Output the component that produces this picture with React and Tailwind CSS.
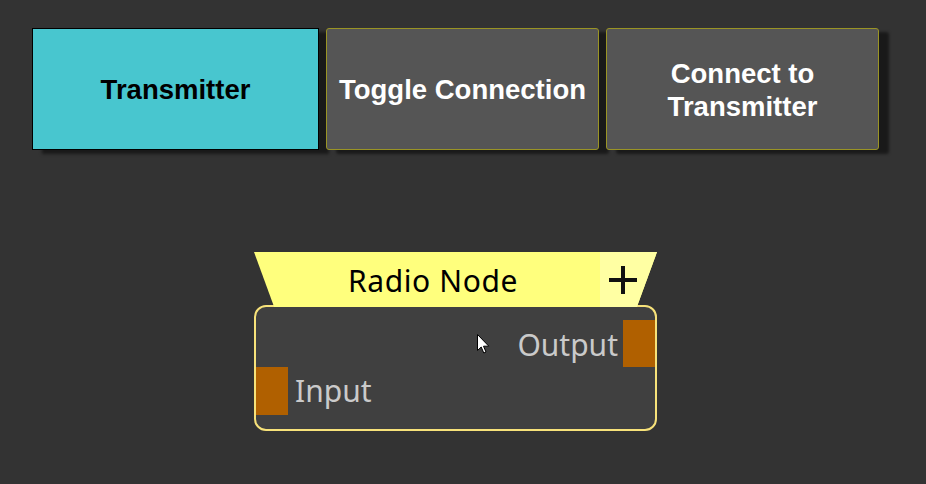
import React from "react";

const btnText = "font-['Liberation_Sans',Arial,sans-serif] font-bold text-[27.5px] leading-[1.2]";

function ToolButton({ label, active }) {
    return (
        <button
            className={`h-[122px] flex items-center justify-center text-center shadow-[10px_4px_3px_rgba(0,0,0,0.5)] ${btnText} ${
                active
                    ? "w-[287px] bg-[#48c6cf] border border-black text-black"
                    : "w-[273px] bg-[#555555] border border-[#9a9425] rounded-[3px] text-white"
            }`}
        >
            <span className="px-2 pt-[1px]">{label}</span>
        </button>
    );
}

function Cursor() {
    return (
        <svg className="absolute left-[477px] top-[334px]" width="13" height="20" viewBox="0 0 13 20">
            <path d="M0.5 0.5 L0.5 16.5 L4.2 13 L6.8 19 L9 18 L6.5 12.2 L11.8 12.2 Z" fill="#fff" stroke="#000" strokeWidth="1" />
        </svg>
    );
}

function RadioNode() {
    return (
        <div className="absolute left-[254px] top-[252px] w-[403px] font-['Noto_Sans',sans-serif]">
            <div className="relative z-10 h-[55px] flex [clip-path:polygon(0_0,100%_0,95%_100%,5%_100%)] bg-[#ffff7d]">
                <div className="flex-1 flex items-center justify-center pl-[12px] pt-[2px] text-[30px] tracking-[0.6px] text-black">
                    Radio Node
                </div>
                <div className="w-[57px] bg-[#ffffa3] flex items-center pl-[9px] pt-[1px]">
                    <svg width="28" height="28" viewBox="0 0 28 28">
                        <rect x="12" y="0" width="4" height="28" fill="#111" />
                        <rect x="0" y="12" width="28" height="4" fill="#111" />
                    </svg>
                </div>
            </div>
            <div className="-mt-[2px] h-[126px] bg-[#404040] border-2 border-[#f7e27a] rounded-[12px] pt-[13px] text-[30px] text-[#cacaca]">
                <div className="flex items-center justify-end h-[47px] gap-[5px]">
                    <span className="pt-[2px]">Output</span>
                    <span className="block w-[32px] h-[47px] bg-[#b06000]" />
                </div>
                <div className="flex items-center h-[48px] gap-[7px]">
                    <span className="block w-[32px] h-[48px] bg-[#b06000]" />
                    <span className="-mt-[1px]">Input</span>
                </div>
            </div>
        </div>
    );
}

export default function App() {
    return (
        <div className="relative w-[926px] h-[484px] bg-[#333333] overflow-hidden">
            <div className="flex gap-[7px] pl-[32px] pt-[28px]">
                <ToolButton label="Transmitter" active />
                <ToolButton label="Toggle Connection" />
                <ToolButton label={<>Connect to<br />Transmitter</>} />
            </div>
            <RadioNode />
            <Cursor />
        </div>
    );
}
